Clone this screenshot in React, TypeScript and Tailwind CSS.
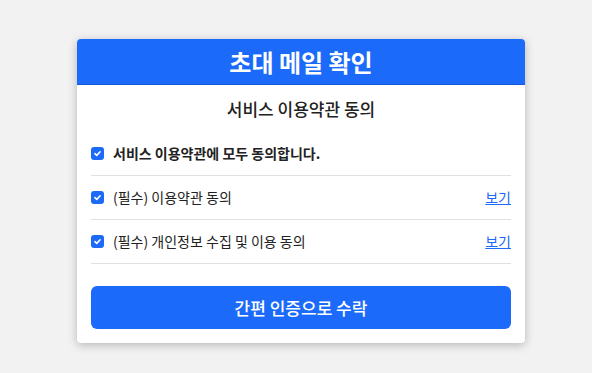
import React from "react";

function Check() {
  return (
    <span className="flex h-[13px] w-[13px] shrink-0 items-center justify-center rounded-[3px] bg-[#1b6af8]">
      <svg width="9" height="9" viewBox="0 0 10 10" fill="none">
        <path d="M2.2 5.2 L4.2 7.1 L7.9 3.1" stroke="white" strokeWidth="1.8" strokeLinecap="round" strokeLinejoin="round" />
      </svg>
    </span>
  );
}

export default function App() {
  const font = { fontFamily: '"Noto Sans CJK KR", "Noto Sans", sans-serif' };
  return (
    <div className="min-h-[373px] w-full bg-[#f2f2f2] pt-[39px] pl-[77px]" style={font}>
      <div className="w-[448px] overflow-hidden rounded-[4px] bg-white shadow-[0_2px_10px_rgba(0,0,0,0.25)]">
        <div className="flex h-[46px] items-center justify-center border-b border-[#1558d6] bg-[#1b6afa] text-[24px] font-bold text-white">
          초대 메일 확인
        </div>
        <div className="px-[14px] pb-[14px]">
          <div className="flex h-[47px] items-center justify-center text-[17px] font-medium text-[#222]">
            서비스 이용약관 동의
          </div>
          <div className="flex h-[44px] items-center gap-[9px] border-b border-[#e0e0e0]">
            <Check />
            <span className="text-[14px] font-bold text-[#222]">서비스 이용약관에 모두 동의합니다.</span>
          </div>
          <div className="flex h-[44px] items-center gap-[9px] border-b border-[#e0e0e0]">
            <Check />
            <span className="flex-1 text-[14px] text-[#222]">(필수) 이용약관 동의</span>
            <a className="text-[14px] text-[#1b6af8] underline">보기</a>
          </div>
          <div className="flex h-[44px] items-center gap-[9px] border-b border-[#e0e0e0]">
            <Check />
            <span className="flex-1 text-[14px] text-[#222]">(필수) 개인정보 수집 및 이용 동의</span>
            <a className="text-[14px] text-[#1b6af8] underline">보기</a>
          </div>
          <button className="mt-[22px] flex h-[43px] w-full items-center justify-center rounded-[6px] bg-[#1b6afa] text-[17px] font-medium text-white">
            간편 인증으로 수락
          </button>
        </div>
      </div>
    </div>
  );
}
